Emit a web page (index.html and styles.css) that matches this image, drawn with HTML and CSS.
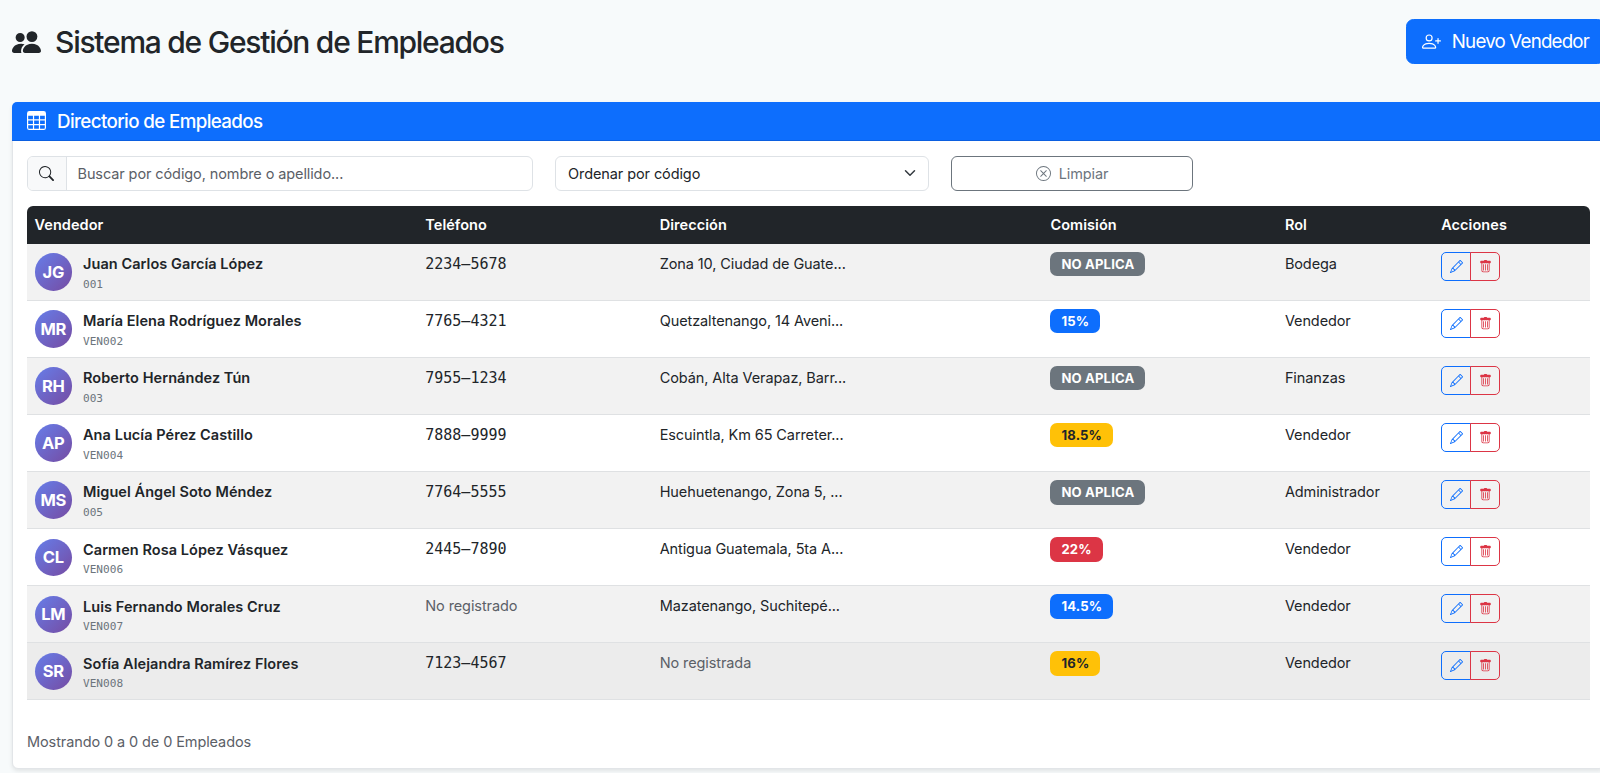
FILE: index.html
```html
<!DOCTYPE html>
<html lang="es">
<head>
<meta charset="utf-8">
<title>Sistema de Gestión de Empleados</title>
<link rel="stylesheet" href="styles.css">
</head>
<body>
<svg class="sprite" aria-hidden="true">
  <symbol id="people" viewBox="0 0 16 16"><path d="M7 14s-1 0-1-1 1-4 5-4 5 3 5 4-1 1-1 1zm4-6a3 3 0 1 0 0-6 3 3 0 0 0 0 6m-5.784 6A2.24 2.24 0 0 1 5 13c0-1.355.68-2.75 1.936-3.72A6.3 6.3 0 0 0 5 9c-4 0-5 3-5 4s1 1 1 1zM4.5 8a2.5 2.5 0 1 0 0-5 2.5 2.5 0 0 0 0 5"/></symbol>
  <symbol id="table" viewBox="0 0 16 16"><path d="M0 2a2 2 0 0 1 2-2h12a2 2 0 0 1 2 2v12a2 2 0 0 1-2 2H2a2 2 0 0 1-2-2zm15 2h-4v3h4zm0 4h-4v3h4zm0 4h-4v3h3a1 1 0 0 0 1-1zm-5 3v-3H6v3zm-5 0v-3H1v2a1 1 0 0 0 1 1zm-4-4h4V8H1zm0-4h4V4H1zm5-3v3h4V4zm4 4H6v3h4z"/></symbol>
  <symbol id="search" viewBox="0 0 16 16"><path d="M11.742 10.344a6.5 6.5 0 1 0-1.397 1.398h-.001q.044.06.098.115l3.85 3.85a1 1 0 0 0 1.415-1.414l-3.85-3.85a1 1 0 0 0-.115-.1zM12 6.5a5.5 5.5 0 1 1-11 0 5.5 5.5 0 0 1 11 0"/></symbol>
  <symbol id="clear" viewBox="0 0 16 16"><path d="M8 15A7 7 0 1 1 8 1a7 7 0 0 1 0 14m0 1A8 8 0 1 0 8 0a8 8 0 0 0 0 16"/><path d="M4.646 4.646a.5.5 0 0 1 .708 0L8 7.293l2.646-2.647a.5.5 0 0 1 .708.708L8.707 8l2.647 2.646a.5.5 0 0 1-.708.708L8 8.707l-2.646 2.647a.5.5 0 0 1-.708-.708L7.293 8 4.646 5.354a.5.5 0 0 1 0-.708"/></symbol>
  <symbol id="person-plus" viewBox="0 0 16 16"><path d="M6 8a3 3 0 1 0 0-6 3 3 0 0 0 0 6m2-3a2 2 0 1 1-4 0 2 2 0 0 1 4 0m4 8c0 1-1 1-1 1H1s-1 0-1-1 1-4 6-4 6 3 6 4m-1-.004c-.001-.246-.154-.986-.832-1.664C9.516 10.68 8.289 10 6 10s-3.516.68-4.168 1.332c-.678.678-.83 1.418-.832 1.664z"/><path fill-rule="evenodd" d="M13.5 5a.5.5 0 0 1 .5.5V7h1.5a.5.5 0 0 1 0 1H14v1.5a.5.5 0 0 1-1 0V8h-1.5a.5.5 0 0 1 0-1H13V5.5a.5.5 0 0 1 .5-.5"/></symbol>
  <symbol id="chevron" viewBox="0 0 16 16"><path fill="none" stroke="#343a40" stroke-linecap="round" stroke-linejoin="round" stroke-width="2" d="m2 5 6 6 6-6"/></symbol>
  <symbol id="pencil" viewBox="0 0 16 16"><path d="M12.146.146a.5.5 0 0 1 .708 0l3 3a.5.5 0 0 1 0 .708l-10 10a.5.5 0 0 1-.168.11l-5 2a.5.5 0 0 1-.65-.65l2-5a.5.5 0 0 1 .11-.168zM11.207 2.5 13.5 4.793 14.793 3.5 12.5 1.207zm1.586 3L10.5 3.207 4 9.707V10h.5a.5.5 0 0 1 .5.5v.5h.5a.5.5 0 0 1 .5.5v.5h.293zm-9.761 5.175-.106.106-1.528 3.821 3.821-1.528.106-.106A.5.5 0 0 1 5 12.5V12h-.5a.5.5 0 0 1-.5-.5V11h-.5a.5.5 0 0 1-.468-.325"/></symbol>
  <symbol id="trash" viewBox="0 0 16 16"><path fill-rule="evenodd" d="M2.5 1a1 1 0 0 0-1 1v1a1 1 0 0 0 1 1H3v9a2 2 0 0 0 2 2h6a2 2 0 0 0 2-2V4h.5a1 1 0 0 0 1-1V2a1 1 0 0 0-1-1H10a1 1 0 0 0-1-1H7a1 1 0 0 0-1 1zM4 4h8v9a1 1 0 0 1-1 1H5a1 1 0 0 1-1-1zm1.5 1a.5.5 0 0 1 .5.5v7a.5.5 0 0 1-1 0v-7a.5.5 0 0 1 .5-.5M8 5a.5.5 0 0 1 .5.5v7a.5.5 0 0 1-1 0v-7A.5.5 0 0 1 8 5m3 .5v7a.5.5 0 0 1-1 0v-7a.5.5 0 0 1 1 0"/></symbol>
</svg>

<div class="container">
  <header class="page-header">
    <h1 class="page-title"><svg class="icon"><use href="#people"/></svg><span>Sistema de Gestión de Empleados</span></h1>
    <button class="btn-new" type="button"><svg class="icon"><use href="#person-plus"/></svg><span>Nuevo Vendedor</span></button>
  </header>

  <section class="card">
    <div class="card-header"><svg class="icon"><use href="#table"/></svg><h2 class="card-title">Directorio de Empleados</h2></div>
    <div class="card-body">
      <div class="filters">
        <div class="search">
          <span class="search-icon"><svg class="icon"><use href="#search"/></svg></span>
          <span class="search-input">Buscar por código, nombre o apellido...</span>
        </div>
        <div class="select"><span>Ordenar por código</span><svg class="icon"><use href="#chevron"/></svg></div>
        <button class="btn-clear" type="button"><svg class="icon"><use href="#clear"/></svg><span>Limpiar</span></button>
      </div>

      <div class="table">
        <div class="row head"><div>Vendedor</div><div>Teléfono</div><div>Dirección</div><div>Comisión</div><div>Rol</div><div>Acciones</div></div>

        <div class="row">
          <div class="person"><span class="avatar">JG</span><div class="identity"><div class="name">Juan Carlos García López</div><div class="code">001</div></div></div>
          <div class="phone">2234–5678</div><div>Zona 10, Ciudad de Guate...</div><div><span class="badge gray">NO APLICA</span></div><div>Bodega</div>
          <div class="actions"><button class="edit"><svg class="icon"><use href="#pencil"/></svg></button><button class="delete"><svg class="icon"><use href="#trash"/></svg></button></div>
        </div>
        <div class="row">
          <div class="person"><span class="avatar">MR</span><div class="identity"><div class="name">María Elena Rodríguez Morales</div><div class="code">VEN002</div></div></div>
          <div class="phone">7765–4321</div><div>Quetzaltenango, 14 Aveni...</div><div><span class="badge blue">15%</span></div><div>Vendedor</div>
          <div class="actions"><button class="edit"><svg class="icon"><use href="#pencil"/></svg></button><button class="delete"><svg class="icon"><use href="#trash"/></svg></button></div>
        </div>
        <div class="row">
          <div class="person"><span class="avatar">RH</span><div class="identity"><div class="name">Roberto Hernández Tún</div><div class="code">003</div></div></div>
          <div class="phone">7955–1234</div><div>Cobán, Alta Verapaz, Barr...</div><div><span class="badge gray">NO APLICA</span></div><div>Finanzas</div>
          <div class="actions"><button class="edit"><svg class="icon"><use href="#pencil"/></svg></button><button class="delete"><svg class="icon"><use href="#trash"/></svg></button></div>
        </div>
        <div class="row">
          <div class="person"><span class="avatar">AP</span><div class="identity"><div class="name">Ana Lucía Pérez Castillo</div><div class="code">VEN004</div></div></div>
          <div class="phone">7888–9999</div><div>Escuintla, Km 65 Carreter...</div><div><span class="badge yellow">18.5%</span></div><div>Vendedor</div>
          <div class="actions"><button class="edit"><svg class="icon"><use href="#pencil"/></svg></button><button class="delete"><svg class="icon"><use href="#trash"/></svg></button></div>
        </div>
        <div class="row">
          <div class="person"><span class="avatar">MS</span><div class="identity"><div class="name">Miguel Ángel Soto Méndez</div><div class="code">005</div></div></div>
          <div class="phone">7764–5555</div><div>Huehuetenango, Zona 5, ...</div><div><span class="badge gray">NO APLICA</span></div><div>Administrador</div>
          <div class="actions"><button class="edit"><svg class="icon"><use href="#pencil"/></svg></button><button class="delete"><svg class="icon"><use href="#trash"/></svg></button></div>
        </div>
        <div class="row">
          <div class="person"><span class="avatar">CL</span><div class="identity"><div class="name">Carmen Rosa López Vásquez</div><div class="code">VEN006</div></div></div>
          <div class="phone">2445–7890</div><div>Antigua Guatemala, 5ta A...</div><div><span class="badge red">22%</span></div><div>Vendedor</div>
          <div class="actions"><button class="edit"><svg class="icon"><use href="#pencil"/></svg></button><button class="delete"><svg class="icon"><use href="#trash"/></svg></button></div>
        </div>
        <div class="row">
          <div class="person"><span class="avatar">LM</span><div class="identity"><div class="name">Luis Fernando Morales Cruz</div><div class="code">VEN007</div></div></div>
          <div class="muted">No registrado</div><div>Mazatenango, Suchitepé...</div><div><span class="badge blue">14.5%</span></div><div>Vendedor</div>
          <div class="actions"><button class="edit"><svg class="icon"><use href="#pencil"/></svg></button><button class="delete"><svg class="icon"><use href="#trash"/></svg></button></div>
        </div>
        <div class="row hover">
          <div class="person"><span class="avatar">SR</span><div class="identity"><div class="name">Sofía Alejandra Ramírez Flores</div><div class="code">VEN008</div></div></div>
          <div class="phone">7123–4567</div><div class="muted">No registrada</div><div><span class="badge yellow">16%</span></div><div>Vendedor</div>
          <div class="actions"><button class="edit"><svg class="icon"><use href="#pencil"/></svg></button><button class="delete"><svg class="icon"><use href="#trash"/></svg></button></div>
        </div>
      </div>
      <p class="summary">Mostrando 0 a 0 de 0 Empleados</p>
    </div>
  </section>
</div>
</body>
</html>
```

FILE: styles.css
```css
* { box-sizing: border-box; }
html { font-size: 15px; }
body {
  margin: 0;
  height: 773px;
  overflow: hidden;
  background: #f7fafb;
  color: #212529;
  font: 400 14.5px/22.5px Inter, "Liberation Sans", sans-serif;
  letter-spacing: -0.1px;
}
.sprite { display: none; }
.icon { display: block; flex: none; width: 15px; height: 15px; fill: currentColor; }
button { font: inherit; letter-spacing: inherit; padding: 0; background: none; }

.container { width: 1593px; margin-left: 12px; padding-top: 19px; }
.page-header { display: flex; justify-content: space-between; align-items: center; height: 45px; margin-bottom: 38px; }
.page-title { display: flex; align-items: center; gap: 14px; margin: 0; font-size: 30px; line-height: 36px; font-weight: 500; letter-spacing: -1.25px; }
.page-title .icon { width: 29px; height: 30px; }
.btn-new {
  display: flex; align-items: center; gap: 11px;
  height: 45px; padding: 0 15px;
  border: 1px solid #0d6efd; border-radius: 7.5px;
  background: #0d6efd; color: #fff; font-size: 18.75px; letter-spacing: -0.82px;
}
.btn-new .icon { width: 19px; height: 19px; }
.btn-new span { padding-top: 2px; }

.card { height: 667px; background: #fff; border: 1px solid #e2e5e8; border-radius: 6px; box-shadow: 0 2px 4px rgba(0, 0, 0, .09); }
.card-header { display: flex; align-items: center; gap: 11px; height: 38.5px; margin: -1px -1px 0; padding: 0 15px; background: #0d6efd; color: #fff; border-bottom: 1px solid #0b5fe0; border-radius: 5px 5px 0 0; }
.card-header .icon { width: 19px; height: 19px; }
.card-title { margin: 0; padding-top: 2px; font-size: 18.75px; font-weight: 500; letter-spacing: -0.62px; }
.card-body { padding: 15px 14px; }

.filters { display: grid; grid-template-columns: 505.6px 373.6px 241.6px; gap: 22.5px; height: 35.5px; margin-bottom: 15px; }
.search { display: flex; border: 1px solid #dee2e6; border-radius: 6px; overflow: hidden; }
.search-icon { display: flex; align-items: center; justify-content: center; width: 38.5px; background: #f8f9fa; border-right: 1px solid #dee2e6; }
.search-input { padding: 6.5px 11px; color: #5b6067; }
.select { display: flex; justify-content: space-between; align-items: center; padding: 0 12px; border: 1px solid #dee2e6; border-radius: 6px; }
.select span, .btn-clear span { padding-top: 1px; }
.select .icon { width: 12px; height: 12px; }
.btn-clear { display: flex; align-items: center; justify-content: center; gap: 8px; border: 1px solid #6c757d; border-radius: 6px; color: #6c757d; }

.table { border-radius: 6px 6px 0 0; overflow: hidden; }
.row { display: grid; grid-template-columns: 25% 15% 25% 15% 10% 10%; height: 57.06px; border-bottom: 1px solid #dfe1e3; }
.row > div { padding: 9px 7.5px 0; }
.row:nth-child(even) { background: #f2f2f2; }
.row.hover { background: #ececec; }
.row.head { height: 38px; background: #212529; border-bottom: 1px solid #212529; color: #fff; font-weight: 600; letter-spacing: 0.06px; }
.row.head > div { padding-top: 8px; }
.row > .person { display: flex; align-items: center; gap: 11px; padding: 0 7.5px; }
.avatar { display: flex; align-items: center; justify-content: center; width: 37.5px; height: 37.5px; border-radius: 50%; background: linear-gradient(135deg, #667eea, #764ba2); color: #fff; font-size: 16.5px; font-weight: 700; letter-spacing: -0.3px; }
.identity { padding-top: 3px; }
.name { font-weight: 600; letter-spacing: 0.06px; }
.code { font: 11.1px/18px "DejaVu Sans Mono", monospace; letter-spacing: 0; color: #6c757d; }
.phone { font-family: "DejaVu Sans Mono", monospace; font-size: 15px; letter-spacing: 0; }
.muted { color: #5b6067; }
.badge { display: block; width: fit-content; height: 24.5px; margin-top: -1.2px; padding: 0 11px; border-radius: 7px; color: #fff; font-size: 13.1px; line-height: 24.5px; font-weight: 700; letter-spacing: 0.15px; }
.gray { background: #6c757d; }
.blue { background: #0d6efd; }
.yellow { background: #ffc107; color: #212529; }
.red { background: #dc3545; }
.row > .actions { display: flex; padding-top: 8px; }
.actions button { display: flex; align-items: center; justify-content: center; width: 30px; height: 29px; border: 1px solid #0d6efd; border-radius: 5px 0 0 5px; color: #0d6efd; }
.actions .delete { margin-left: -1px; border-color: #dc3545; border-radius: 0 5px 5px 0; color: #dc3545; }
.actions .icon { width: 13px; height: 13px; }
.summary { margin: 31px 0 0; color: #5b6067; }
```
